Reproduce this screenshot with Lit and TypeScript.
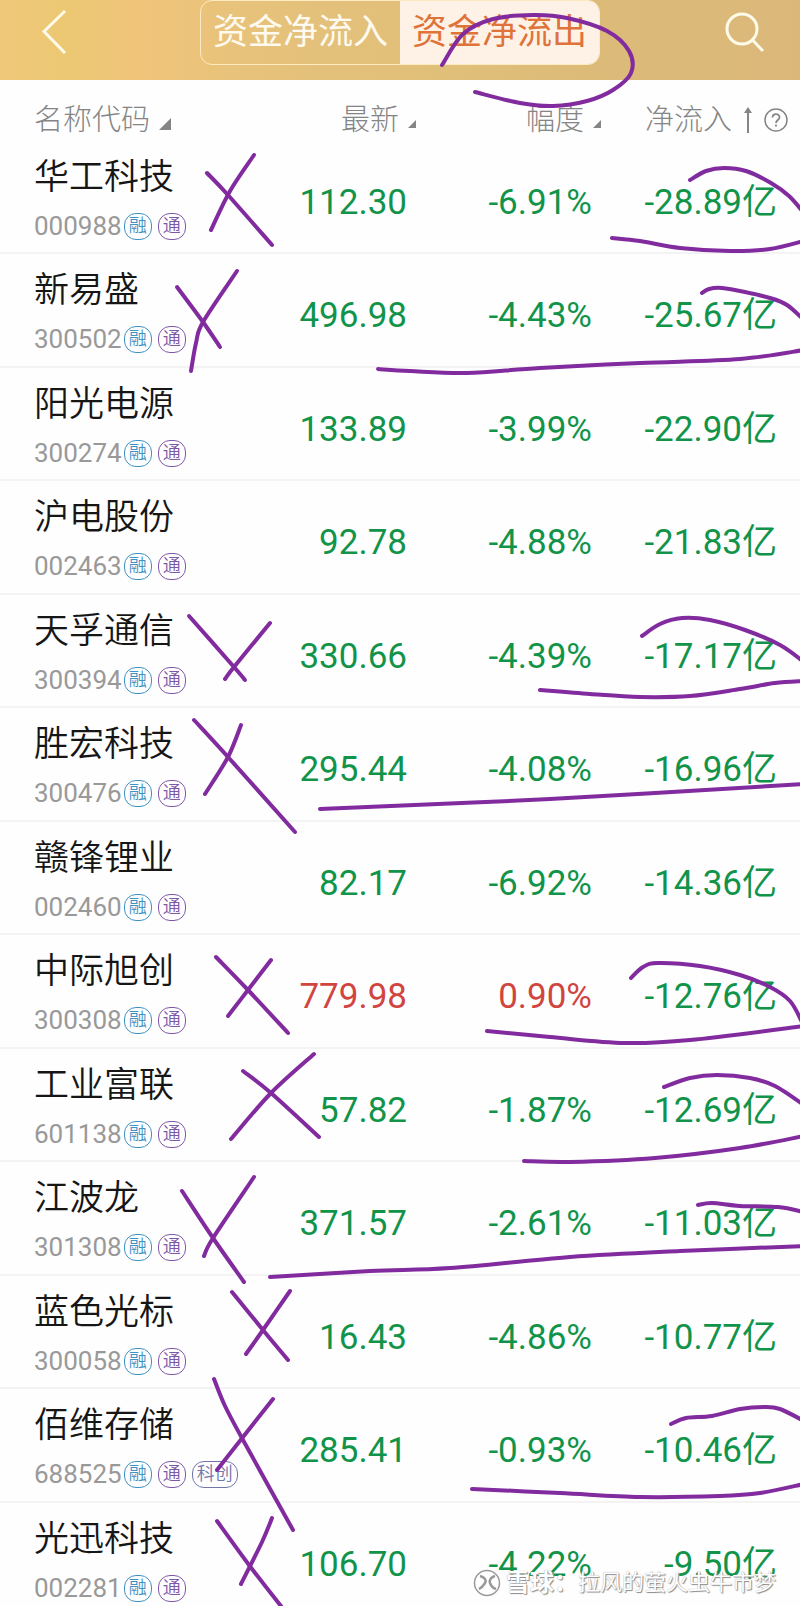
import { LitElement, html, css, svg } from "lit";
import { customElement, state } from "lit/decorators.js";
import { classMap } from "lit/directives/class-map.js";

type Stock = { name: string; code: string; tags: string[]; price: string; change: string; flow: string };
type Point = [number, number];

const RONG = "融";
const TONG = "通";
const KECHUANG = "科创";

const STOCKS: Stock[] = [
  { name: "华工科技", code: "000988", tags: [RONG, TONG], price: "112.30", change: "-6.91%", flow: "-28.89亿" },
  { name: "新易盛", code: "300502", tags: [RONG, TONG], price: "496.98", change: "-4.43%", flow: "-25.67亿" },
  { name: "阳光电源", code: "300274", tags: [RONG, TONG], price: "133.89", change: "-3.99%", flow: "-22.90亿" },
  { name: "沪电股份", code: "002463", tags: [RONG, TONG], price: "92.78", change: "-4.88%", flow: "-21.83亿" },
  { name: "天孚通信", code: "300394", tags: [RONG, TONG], price: "330.66", change: "-4.39%", flow: "-17.17亿" },
  { name: "胜宏科技", code: "300476", tags: [RONG, TONG], price: "295.44", change: "-4.08%", flow: "-16.96亿" },
  { name: "赣锋锂业", code: "002460", tags: [RONG, TONG], price: "82.17", change: "-6.92%", flow: "-14.36亿" },
  { name: "中际旭创", code: "300308", tags: [RONG, TONG], price: "779.98", change: "0.90%", flow: "-12.76亿" },
  { name: "工业富联", code: "601138", tags: [RONG, TONG], price: "57.82", change: "-1.87%", flow: "-12.69亿" },
  { name: "江波龙", code: "301308", tags: [RONG, TONG], price: "371.57", change: "-2.61%", flow: "-11.03亿" },
  { name: "蓝色光标", code: "300058", tags: [RONG, TONG], price: "16.43", change: "-4.86%", flow: "-10.77亿" },
  { name: "佰维存储", code: "688525", tags: [RONG, TONG, KECHUANG], price: "285.41", change: "-0.93%", flow: "-10.46亿" },
  { name: "光迅科技", code: "002281", tags: [RONG, TONG], price: "106.70", change: "-4.22%", flow: "-9.50亿" },
];

const TAG_CLASS: Record<string, string> = { [RONG]: "tag rong", [TONG]: "tag tong", [KECHUANG]: "tag ke" };

// Freehand pen strokes laid over the list.
const STROKES: Point[][] = [
  [[442, 65], [463, 34], [493, 19], [533, 15], [567, 18], [607, 31], [629, 51], [631, 73], [613, 90], [587, 101], [553, 106], [520, 103], [475, 92]],
  [[254, 155], [230, 191], [211, 230]],
  [[207, 173], [228, 195], [272, 245]],
  [[690, 180], [706, 171], [724, 168], [746, 171], [771, 183], [789, 196], [804, 213]],
  [[612, 238], [640, 241], [680, 248], [730, 251], [770, 249], [804, 241]],
  [[237, 271], [203, 322], [196, 343], [191, 371]],
  [[177, 287], [203, 322], [220, 347]],
  [[702, 293], [709, 289], [722, 288], [745, 292], [770, 298], [787, 305], [804, 320]],
  [[378, 369], [410, 371], [467, 373], [540, 368], [640, 363], [740, 359], [804, 350]],
  [[189, 616], [234, 667], [245, 680]],
  [[270, 623], [234, 667], [225, 679]],
  [[642, 636], [660, 624], [682, 618], [710, 620], [745, 630], [780, 645], [804, 662]],
  [[540, 690], [590, 694], [640, 697], [690, 696], [740, 689], [775, 683], [804, 681]],
  [[194, 720], [228, 757], [295, 832]],
  [[241, 725], [228, 757], [205, 794]],
  [[320, 809], [550, 799], [804, 784]],
  [[216, 957], [248, 990], [288, 1033]],
  [[271, 960], [248, 990], [228, 1016]],
  [[631, 978], [643, 967], [658, 963], [700, 966], [740, 975], [770, 987], [790, 1001], [802, 1022]],
  [[487, 1031], [550, 1037], [625, 1043], [690, 1040], [804, 1026]],
  [[243, 1071], [271, 1093], [319, 1137]],
  [[314, 1054], [271, 1093], [231, 1139]],
  [[664, 1087], [690, 1078], [717, 1075], [750, 1078], [775, 1086], [804, 1105]],
  [[524, 1161], [570, 1162], [655, 1158], [740, 1148], [804, 1136]],
  [[182, 1191], [213, 1238], [244, 1282]],
  [[254, 1177], [213, 1238], [204, 1256]],
  [[698, 1205], [712, 1203], [740, 1206], [778, 1207], [804, 1212]],
  [[270, 1277], [370, 1271], [450, 1268], [570, 1257], [680, 1251], [804, 1246]],
  [[232, 1292], [263, 1330], [288, 1360]],
  [[290, 1291], [263, 1330], [246, 1354]],
  [[214, 1379], [225, 1406], [243, 1440], [293, 1530]],
  [[273, 1399], [243, 1437], [217, 1470]],
  [[671, 1424], [686, 1418], [712, 1416], [740, 1409], [764, 1407], [780, 1409], [804, 1421]],
  [[472, 1489], [560, 1493], [640, 1497], [720, 1496], [760, 1493], [804, 1484]],
  [[217, 1521], [249, 1565], [284, 1610]],
  [[272, 1518], [262, 1542], [241, 1584]],
];

/** Smooth curve running through every point of a stroke. */
function curve(points: Point[]): string {
  let d = `M${points[0][0]} ${points[0][1]}`;
  for (let i = 0; i < points.length - 1; i++) {
    const a = points[Math.max(0, i - 1)];
    const b = points[i];
    const c = points[i + 1];
    const e = points[Math.min(points.length - 1, i + 2)];
    d += `C${b[0] + (c[0] - a[0]) / 6} ${b[1] + (c[1] - a[1]) / 6} ${c[0] - (e[0] - b[0]) / 6} ${c[1] - (e[1] - b[1]) / 6} ${c[0]} ${c[1]}`;
  }
  return d;
}

@customElement("app-root")
export class AppRoot extends LitElement {
  @state() private tab = 1;

  static styles = css`
    :host {
      display: block;
      position: relative;
      overflow: hidden;
      background: #fefefe;
      font-family: Roboto, "Noto Sans CJK SC", sans-serif;
    }
    button {
      font: inherit;
      color: inherit;
      background: none;
      border: 0;
      padding: 0;
      margin: 0;
      cursor: pointer;
    }
    svg { display: block; }
    .bar {
      display: grid;
      grid-template-columns: 1fr 2fr 1fr;
      align-items: start;
      height: 80px;
      background: linear-gradient(90deg, #f0c87a 0, #ecc873 8%, #f0c47a 18%, #e6c27b 32%, #e0bf79 55%, #dcbb79 75%, #dbb87a 100%);
    }
    .back { justify-self: start; padding: 8px 0 0 40px; }
    .search { justify-self: end; padding: 10px 34px 0 0; }
    .tabs {
      display: grid;
      grid-template-columns: 1fr 1fr;
      height: 65px;
      box-sizing: border-box;
      border: 1px solid #fcebc0;
      border-radius: 12px;
      overflow: hidden;
    }
    .tab {
      color: #fffaf0;
      font-size: 35px;
      line-height: 64px;
      white-space: nowrap;
    }
    .tab.on { background: #fef2e6; color: #e07339; }
    .list {
      width: 100%;
      table-layout: fixed;
      border-collapse: separate;
      border-spacing: 0;
    }
    .num { width: 185px; }
    th {
      height: 61px;
      padding: 20px 14px 0 0;
      box-sizing: border-box;
      font-size: 29px;
      font-weight: 300;
      color: #858585;
      text-align: right;
      white-space: nowrap;
      vertical-align: top;
    }
    th.first { padding-left: 34px; text-align: left; }
    .sort { display: inline-flex; align-items: center; gap: 9px; line-height: 40px; vertical-align: top; }
    .mark { margin-top: 8px; }
    .flowhead { gap: 12px; margin-right: -2px; }
    td {
      height: 113px;
      box-sizing: border-box;
      padding: 41px 23px 0 0;
      vertical-align: top;
      border-bottom: 2px solid #f3f3f3;
      font-size: 35px;
      line-height: 42px;
      text-align: right;
      white-space: nowrap;
      color: #11944a;
    }
    tr:nth-child(even) td { height: 114px; }
    tr:last-child td { height: 104px; border-bottom: 0; }
    td.up { color: #d0453f; }
    td.stock { padding: 14px 0 0 34px; text-align: left; color: #161616; }
    .name { font-weight: 350; line-height: 46px; }
    .meta { display: flex; align-items: center; gap: 6px; padding-top: 11px; line-height: 28px; }
    .code { font-size: 26px; color: #999; margin-right: -4px; }
    .tag {
      box-sizing: border-box;
      height: 27px;
      min-width: 27px;
      padding: 0 4px;
      border: 1px solid;
      border-radius: 12px;
      font-size: 18px;
      line-height: 24px;
      font-weight: 350;
      text-align: center;
    }
    .rong { color: #3f92c4; }
    .tong { color: #7e58a8; }
    .ke { color: #7275ab; }
    .ink {
      position: absolute;
      top: 0;
      left: 0;
      width: 100%;
      height: auto;
      pointer-events: none;
      fill: none;
      stroke: #812b9e;
      stroke-width: 4;
      stroke-linecap: round;
      stroke-linejoin: round;
    }
    .credit {
      position: absolute;
      right: 24px;
      bottom: 8px;
      display: flex;
      align-items: center;
      font-size: 22px;
      line-height: 32px;
      color: #fff;
      text-shadow: 1px 1px 1px #8a8a8a, 0 0 1px #999;
      white-space: nowrap;
      pointer-events: none;
    }
    .brand { font-size: 24px; font-weight: 700; padding-left: 5px; }
  `;

  private renderTab(label: string, index: number) {
    return html`<button
      class=${classMap({ tab: true, on: this.tab === index })}
      role="tab"
      aria-selected=${this.tab === index}
      @click=${() => (this.tab = index)}
    >${label}</button>`;
  }

  private sortMark(size: number) {
    return html`<svg class="mark" width=${size} height=${size} viewBox="0 0 10 10" aria-hidden="true"><path d="M10 0V10H0Z" fill="#858585" /></svg>`;
  }

  private tone(value: string) {
    return value.startsWith("-") ? "down" : "up";
  }

  render() {
    return html`
      <header class="bar">
        <button class="back" aria-label="返回">
          <svg width="28" height="46" viewBox="0 0 28 46" fill="none" stroke="#fffbea" stroke-width="3"><path d="M25 3L4 23.5L25 45" /></svg>
        </button>
        <div class="tabs" role="tablist">${this.renderTab("资金净流入", 0)}${this.renderTab("资金净流出", 1)}</div>
        <button class="search" aria-label="搜索">
          <svg width="42" height="44" viewBox="0 0 42 44" fill="none" stroke="#fffbea" stroke-width="3"><circle cx="18" cy="19" r="15" /><path d="M28.500 30L39 41" /></svg>
        </button>
      </header>
      <table class="list">
        <colgroup><col /><col class="num" /><col class="num" /><col class="num" /></colgroup>
        <thead>
          <tr>
            <th class="first" scope="col"><button class="sort">名称代码 ${this.sortMark(12)}</button></th>
            <th scope="col"><button class="sort">最新 ${this.sortMark(8)}</button></th>
            <th scope="col"><button class="sort">幅度 ${this.sortMark(8)}</button></th>
            <th scope="col">
              <button class="sort flowhead">净流入
                <svg width="8" height="26" viewBox="0 0 8 26" fill="none" stroke="#858585" stroke-width="2"><path d="M4 26V2" /><path d="M0 6L4 0L8 6Z" fill="#858585" stroke="none" /></svg>
                <svg class="help" width="24" height="24" viewBox="0 0 24 24" fill="none" stroke="#858585"><circle cx="12" cy="12" r="11" stroke-width="1.500" /><path d="M8.500 9.500C8.500 5 15.500 5 15.500 9.300C15.500 12 12 12 12 15M12 16.500V18.500" stroke-width="1.800" /></svg>
              </button>
            </th>
          </tr>
        </thead>
        <tbody>
          ${STOCKS.map(
            (s) => html`<tr>
              <td class="stock">
                <div class="name">${s.name}</div>
                <div class="meta"><span class="code">${s.code}</span>${s.tags.map((t) => html`<span class=${TAG_CLASS[t]}>${t}</span>`)}</div>
              </td>
              <td class=${this.tone(s.change)}>${s.price}</td>
              <td class=${this.tone(s.change)}>${s.change}</td>
              <td class=${this.tone(s.flow)}>${s.flow}</td>
            </tr>`,
          )}
        </tbody>
      </table>
      <svg class="ink" viewBox="0 0 800 1606" aria-hidden="true">${STROKES.map((p) => svg`<path d=${curve(p)} />`)}</svg>
      <div class="credit">
        <svg width="28" height="28" viewBox="0 0 28 28" fill="none">
          <circle cx="14" cy="14" r="12.500" fill="#fff" fill-opacity=".6" stroke="#9a9a9a" stroke-width="1.500" />
          <path d="M7 7C11 8 14 11 12 14C10 17 9 19 6 20M22 7C18 8 16 11 17 14C18 17 20 19 23 20" stroke="#999" stroke-width="2.500" />
        </svg>
        <span class="brand">雪球：</span><span>拉风的萤火虫牛市梦</span>
      </div>
    `;
  }
}
